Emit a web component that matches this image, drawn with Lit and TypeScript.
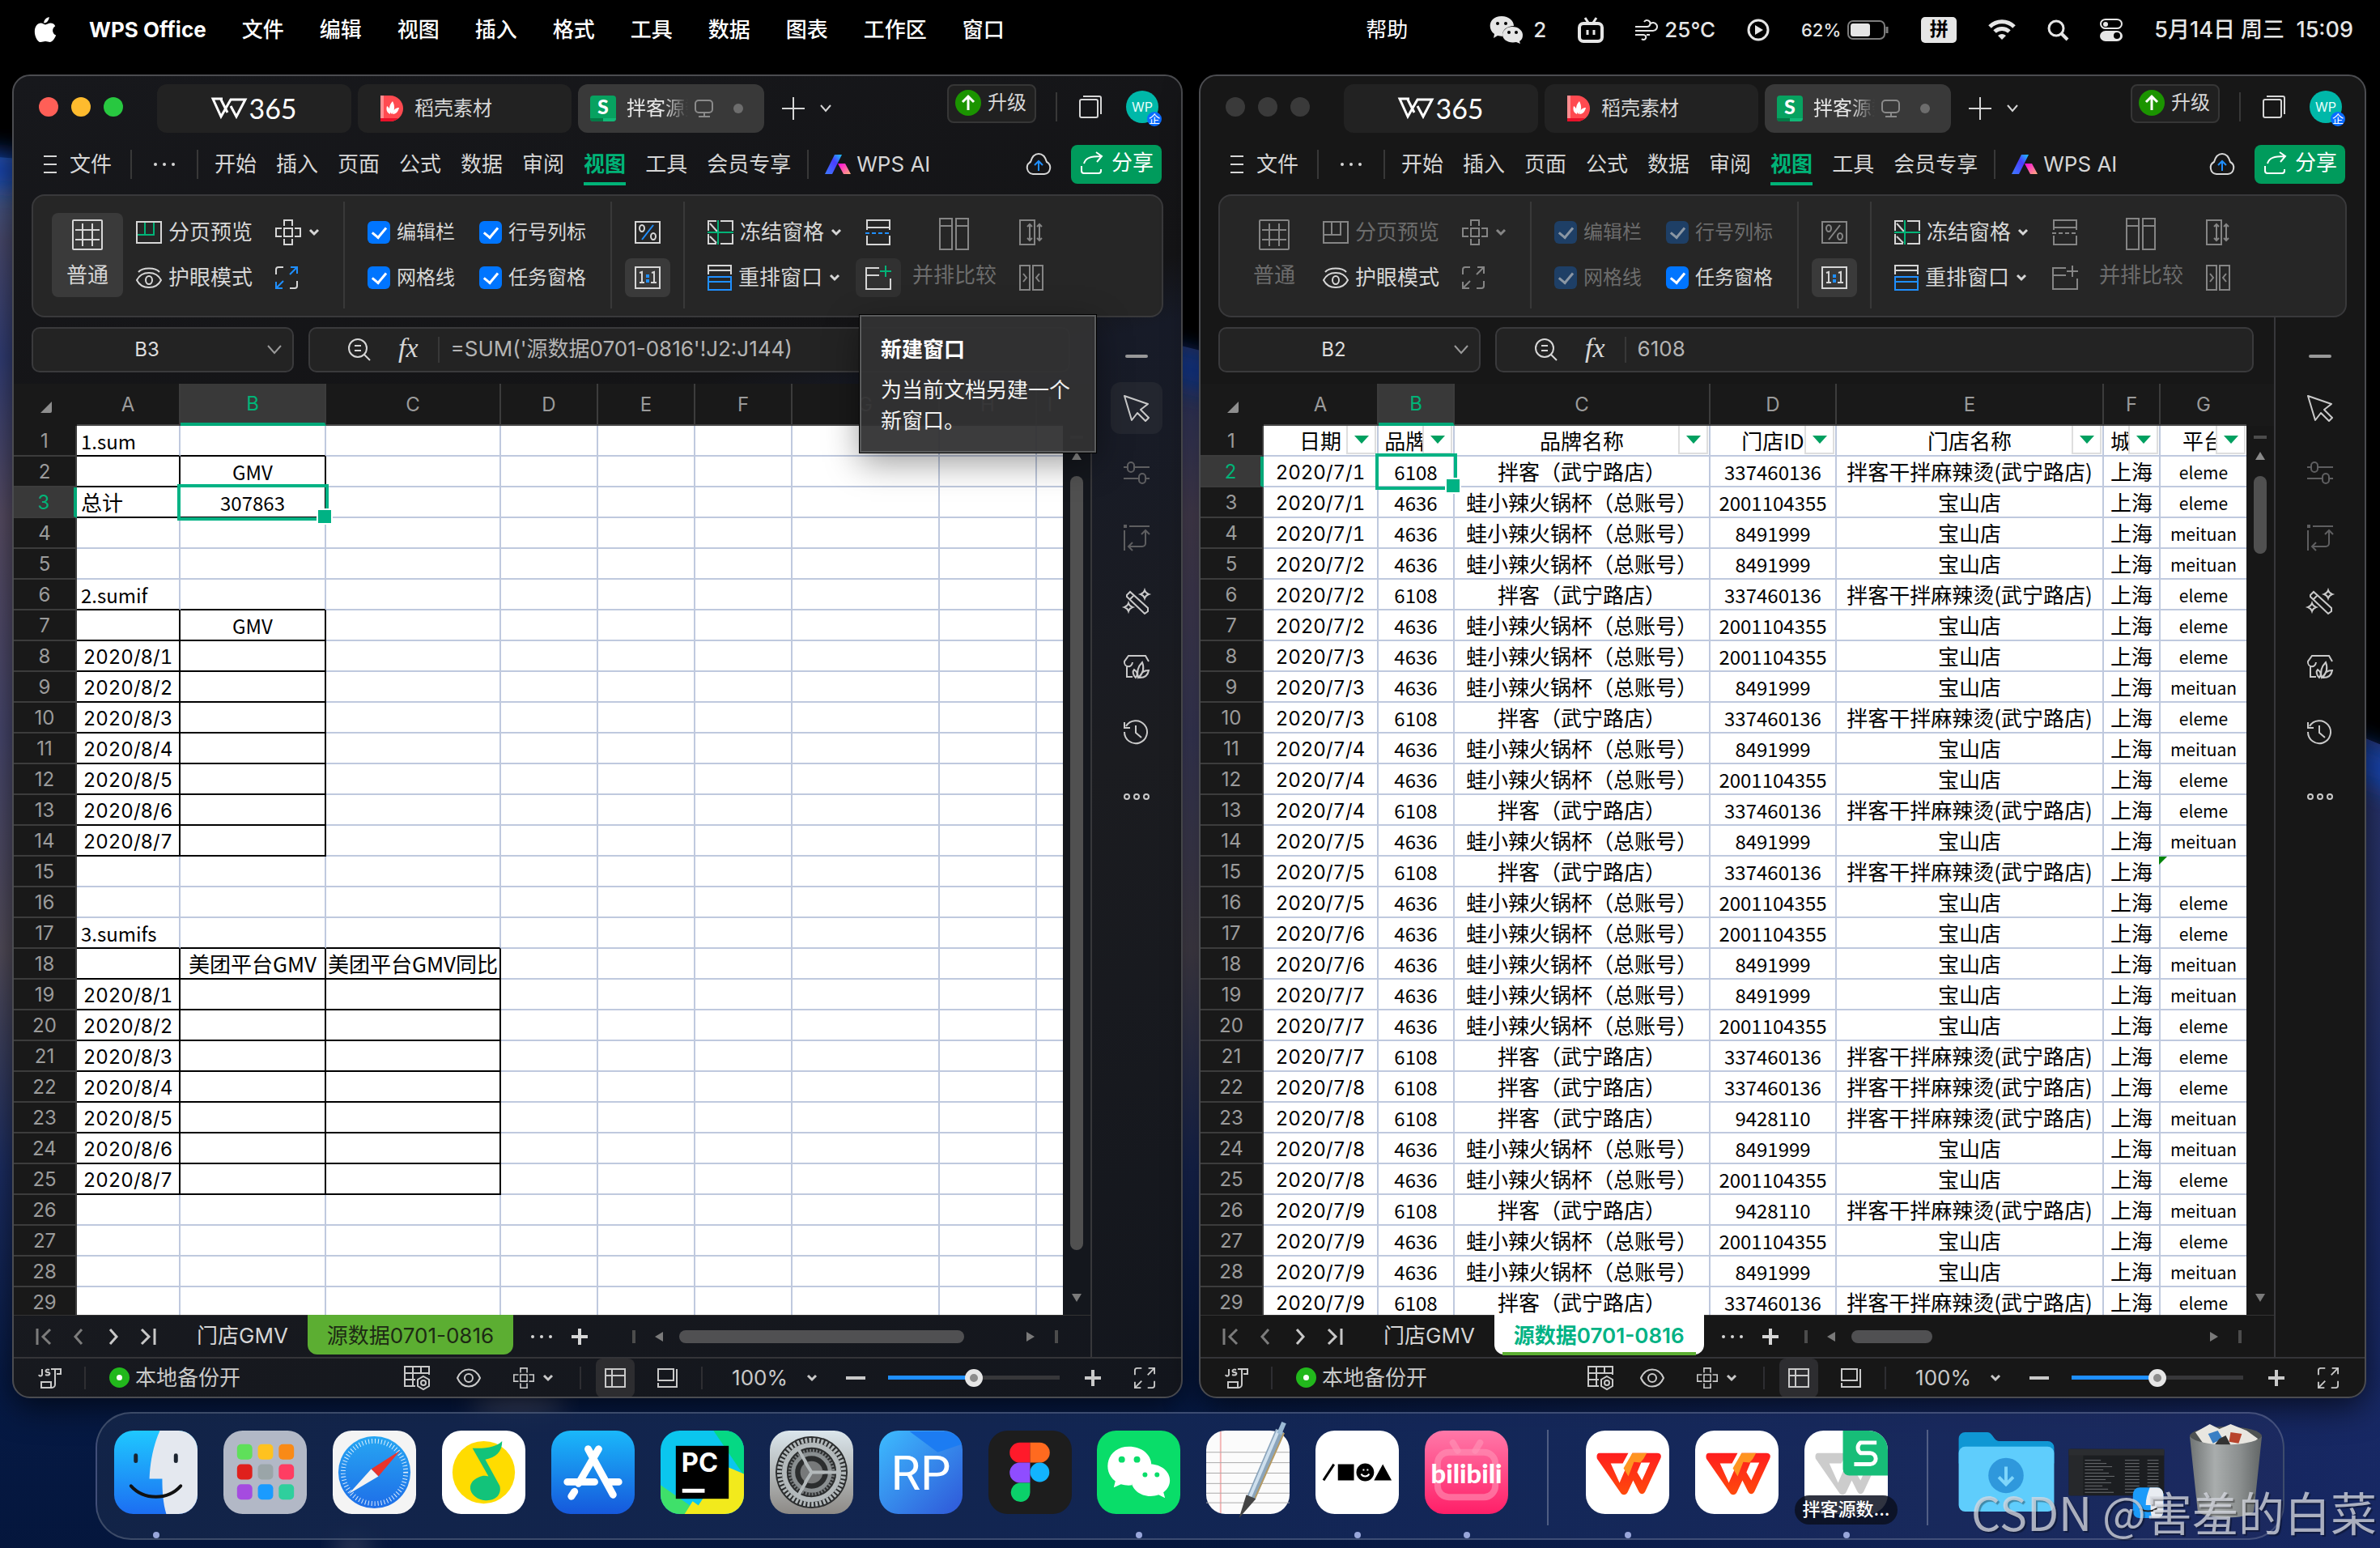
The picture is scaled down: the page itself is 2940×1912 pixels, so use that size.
import { LitElement, html, svg, css, nothing, TemplateResult } from "lit";
import { customElement, property } from "lit/decorators.js";
import { classMap } from "lit/directives/class-map.js";
import { styleMap } from "lit/directives/style-map.js";

/* ---------- icons ---------- */

const icon = (w: number, h: number, body: unknown, cls = "") =>
  html`<svg class="ic ${cls}" width=${w} height=${h} viewBox="0 0 ${w} ${h}" aria-hidden="true">${body}</svg>`;

const chevron = () => icon(14, 10, svg`<path d="M2 2l5 5 5-5"/>`, "bold");
const crossHair = (s = 32) => html`<svg class="ic" width=${s} height=${s} viewBox="0 0 32 32" aria-hidden="true">
  <path d="M11 11h10v10H11zM11 8V1h10v7M11 24v7h10v-7M8 11H1v10h7M24 11h7v10h-7"/></svg>`;
const corners = (s: number) => html`<svg class="ic" width=${s} height=${s} viewBox="0 0 28 28" aria-hidden="true">
  <path d="M10 1H4a3 3 0 0 0-3 3v6M18 27h6a3 3 0 0 0 3-3v-6"/>
  <path class="b" d="M19 1h8v8M27 1l-9 9M9 27H1v-8M1 27l9-9"/></svg>`;

const icons = {
  burger: () => icon(16, 24, svg`<path d="M0 2h16M0 12h16M0 22h16"/>`),
  dots: () => icon(28, 6, svg`<g class="fill"><circle cx="3" cy="3" r="2"/><circle cx="14" cy="3" r="2"/><circle cx="25" cy="3" r="2"/></g>`),
  plus: () => icon(28, 28, svg`<path d="M14 0v28M0 14h28"/>`),
  plusSmall: () => icon(20, 20, svg`<path stroke-width="4" d="M10 0v20M0 10h20"/>`),
  minus: () => icon(24, 4, svg`<path stroke-width="4" d="M0 2h24"/>`),
  more2: () => icon(14, 10, svg`<path d="M1 1l6 7 6-7"/>`),
  fullscreen: () => corners(28),
  normal: () => icon(38, 38, svg`<rect x="1" y="1" width="36" height="36" rx="1"/><path d="M13 5v28M25 5v28M4 13h30M4 25h30"/>`),
  pageBreak: () => icon(32, 28, svg`<rect x="1" y="1" width="30" height="26"/><path class="g" d="M11 2v16M22 2v16M2 17h21"/>`),
  eyeCare: () => icon(32, 26, svg`<path d="M3 6C8 0 24 0 29 6M1 16C7 4 25 4 31 16 25 28 7 28 1 16z"/><ellipse cx="16" cy="16" rx="4" ry="5"/>`),
  percent: () => icon(32, 28, svg`<rect x="1" y="1" width="30" height="26"/><ellipse cx="9" cy="9" rx="3" ry="4"/><ellipse cx="23" cy="19" rx="3" ry="4"/><path class="b" d="M23 5L9 23"/>`),
  ratio: () => icon(32, 28, svg`<rect x="1" y="1" width="30" height="26"/><path d="M6 8l3-1v13M6 20h6M21 8l3-1v13M20 20h7"/><path class="b" stroke-width="4" d="M14 12h4M14 18h4"/>`),
  freeze: () => icon(32, 30, svg`<path d="M11 1H1v12M16 1h15v12M1 17v12h10M16 29h15V17M3 4l9 10M3 20l8 8"/><path class="g" d="M13 0v30M0 15h32"/>`),
  arrange: () => icon(30, 32, svg`<path d="M1 12V1h28v11M1 7h28"/><path class="b" d="M1 15h28v16H1zM1 21h28"/>`),
  split: () => icon(32, 32, svg`<path d="M2 13V1h28v12M2 10h28M2 20v11h28V20"/><path class="b" stroke-dasharray="5 3" d="M0 17h32"/>`),
  newWindow: () => icon(32, 30, svg`<path d="M17 3H1v26h30V16M1 12h16"/><path class="g" d="M25 0v14M18 7h14"/>`),
  compare: () => icon(38, 40, svg`<path d="M1 1h15v38H1zM1 10h15M21 1h15v38H21zM21 10h15"/>`),
  syncScroll: () => icon(30, 32, svg`<path d="M9 31H1V1h18v30H9"/><path d="M13 6v20M10 9l3-3 3 3M10 23l3 3 3-3M25 6v20M22 9l3-3 3 3M22 23l3 3 3-3"/>`),
  resetPos: () => icon(30, 32, svg`<path d="M1 1h12v30H1zM17 1h12v30H17zM5 11l4 5-4 5M25 11l-4 5 4 5"/>`),
  windows: () => icon(28, 28, svg`<rect x="1" y="5" width="22" height="22" rx="2"/><path d="M5 1h20a2 2 0 0 1 2 2v20"/>`),
  monitor: () => icon(24, 22, svg`<rect x="1" y="1" width="21" height="15" rx="4"/><path d="M12 17v3M5 21h14"/>`),
  cloud: () => icon(34, 28, svg`<path d="M10 26h14a8 8 0 0 0 3-15C25 4 21 1 17 1S9 4 7 11a8 8 0 0 0 3 15z"/><path class="b" d="M17 22V10M12 15l5-5 5 5"/>`),
  share: () => icon(28, 28, svg`<path d="M1 18v6a3 3 0 0 0 3 3h18a3 3 0 0 0 3-3v-2"/><path d="M4 15c2-7 8-9 21-9M19 1l7 5-6 7"/>`),
  ai: () => html`<svg width="32" height="24" viewBox="0 0 32 24" aria-hidden="true">
    <defs><linearGradient id="ai1" x1="0" y1="1" x2="1" y2="0"><stop offset="0" stop-color="#3d7bff"/><stop offset=".6" stop-color="#4a3dff"/><stop offset="1" stop-color="#19c8ff"/></linearGradient>
    <linearGradient id="ai2" x1="0" y1="0" x2="1" y2="1"><stop offset="0" stop-color="#ff00e0"/><stop offset="1" stop-color="#ffb37a"/></linearGradient></defs>
    <path fill="url(#ai1)" d="M0 24L12 0h9L9 24z"/><path fill="url(#ai2)" d="M16 11h9l7 13h-9z"/></svg>`,
  wlogo: () => icon(44, 26, svg`<path stroke-width="3" d="M14 1H2l10 22 12-21h18L31 23l-7-13M12 2l8 16"/>`),
  docer: () => html`<svg width="28" height="32" viewBox="0 0 28 32" aria-hidden="true">
    <path fill="#ff4a50" d="M0 0h12a16 16 0 0 1 0 32H0z"/><path fill="#ff8d90" d="M0 0h4v32H0z"/><path fill="#e8112a" d="M0 28h22a16 16 0 0 1-10 4H0z"/>
    <path fill="#fff" d="M14 23c-5-5-3-12 1-16 3 6 3 11-1 16zM12 23c-5-2-5-7-4-10 3 2 5 6 4 10zM15 23c1-6 4-8 8-8-1 5-4 8-8 8z"/></svg>`,
  sheet: () => html`<svg width="32" height="32" viewBox="0 0 32 32" aria-hidden="true">
    <rect width="32" height="32" rx="4" fill="#07a260"/><path fill="#047a46" d="M0 28h16v4H4a4 4 0 0 1-4-4z"/><path fill="#12b877" d="M16 28h16a4 4 0 0 1-4 4H16z"/>
    <text x="16" y="23" text-anchor="middle" fill="#fff" font-family="Lato, sans-serif" font-weight="900" font-size="25">S</text></svg>`,
  up: () => html`<svg width="32" height="32" viewBox="0 0 32 32" aria-hidden="true"><circle cx="16" cy="16" r="16" fill="#1b9400"/><path d="M16 25V8M9 15l7-7 7 7" fill="none" stroke="#fff" stroke-width="3"/></svg>`,
  search: () => icon(28, 28, svg`<circle cx="12" cy="12" r="11"/><path d="M20 20l7 7M8 9h8M8 15h8"/>`),
  corner: () => icon(16, 16, svg`<path class="fill" d="M15 1v12a2 2 0 0 1-2 2H1z"/>`),
  pointer: () => icon(32, 32, svg`<path d="M1 1l29 10-9 7 10 10-4 4-10-10-7 9z" stroke-linejoin="round"/>`),
  sliders: () => icon(32, 28, svg`<path d="M0 7h5M13 7h19M0 21h19M27 21h5"/><rect x="5" y="1" width="8" height="12" rx="4"/><rect x="19" y="15" width="8" height="12" rx="4"/>`),
  transpose: () => icon(32, 32, svg`<path d="M7 2h25M1 7v25M27 7v16a4 4 0 0 1-4 4H7M22 12l5-5 5 5M11 22l-5 5 5 5"/><path class="fill" d="M0 0h4v4H0z"/>`),
  wand: () => icon(32, 32, svg`<path d="M4 7l4-4 22 20v4l-4 3L4 9zM13 7L8 12M26 1c1 3 2 4 5 5-3 1-4 2-5 5-1-3-2-4-5-5 3-1 4-2 5-5zM6 17c1 3 2 4 5 5-3 1-4 2-5 5-1-3-2-4-5-5 3-1 4-2 5-5z"/>`),
  shop: () => icon(32, 30, svg`<path d="M31 8l-4-7H6L1 8c-1 7 9 9 10 1M4 14v13h7M15 28c-4-4-4-8-2-10 4 3 5 6 2 10zM18 28c-2-7 0-14 5-19 3 8 1 14-5 19zM20 28c1-6 5-9 11-9-1 6-5 9-11 9z"/>`),
  history: () => icon(32, 32, svg`<path d="M3 9a14 14 0 1 1-2 7M1 4v7h7M15 8v9l7 6"/>`),
  more: () => icon(32, 10, svg`<circle cx="4" cy="5" r="3"/><circle cx="16" cy="5" r="3"/><circle cx="28" cy="5" r="3"/>`),
  js: () => icon(28, 26, svg`<path d="M4 2v6a2 2 0 0 1-4 1M13 3c-5-2-6 3-2 3s3 5-3 3M15 2h12v6h-5M20 2v19a4 4 0 0 1-4 4H3v-7h12v6"/>`),
  tableGear: () => icon(32, 30, svg`<path d="M14 25H1V1h30v10M1 9h30M1 17h13M11 1v24M21 1v9"/><path d="M24 13l7 4v8l-7 4-7-4v-8z"/><circle cx="24" cy="21" r="3"/>`),
  eye: () => icon(30, 24, svg`<path d="M1 12C7-2 23-2 29 12 23 26 7 26 1 12z"/><circle cx="15" cy="12" r="5"/>`),
  viewGrid: () => icon(26, 24, svg`<path d="M1 1h24v22H1zM1 9h24M9 1v22"/>`),
  viewPage: () => icon(26, 24, svg`<path d="M1 1h19v14H1zM24 1v22H1v-5"/>`),
  navFirst: () => icon(20, 20, svg`<path stroke-width="3" d="M2 0v20M18 1l-9 9 9 9"/>`),
  navPrev: () => icon(12, 20, svg`<path stroke-width="3" d="M10 1l-8 9 8 9"/>`),
  navNext: () => icon(12, 20, svg`<path stroke-width="3" d="M2 1l8 9-8 9"/>`),
  navLast: () => icon(20, 20, svg`<path stroke-width="3" d="M18 0v20M2 1l9 9-9 9"/>`),
};

const shared = css`
  * { box-sizing: border-box; }
  .ic { display: block; flex: none; fill: none; stroke: currentColor; stroke-width: 2; overflow: visible; }
  .ic.bold { stroke-width: 3; }
  .fill { fill: currentColor; stroke: none; }
  .g { stroke: var(--g, #00b377); }
  .b { stroke: var(--b, #1f8fff); }
  button { font: inherit; color: inherit; background: none; border: 0; padding: 0; margin: 0; display: flex; align-items: center; cursor: default; }
  button, label { white-space: nowrap; }
`;

/* ---------- sheet data ---------- */

interface Cell { text?: string; kind?: "date" | "num" | "text" | "latin" | "tag"; left?: boolean; box?: boolean; filter?: boolean; flag?: boolean; }
interface Sheet { widths: number[]; active: [number, number]; rows: Cell[][]; }

const ROWS = 29;
const letters = "ABCDEFGHI";

function summarySheet(): Sheet {
  const rows: Cell[][] = Array.from({ length: ROWS }, () => Array.from({ length: 9 }, () => ({})));
  const put = (r: number, c: number, cell: Cell) => (rows[r - 1][c] = { ...rows[r - 1][c], ...cell });
  const frame = (r1: number, r2: number, cols: number) => {
    for (let r = r1; r <= r2; r++) for (let c = 0; c < cols; c++) put(r, c, { box: true });
  };
  frame(2, 3, 2);
  frame(7, 14, 2);
  frame(18, 25, 3);
  put(1, 0, { text: "1.sum", kind: "latin", left: true });
  put(2, 1, { text: "GMV", kind: "latin" });
  put(3, 0, { text: "总计", left: true });
  put(3, 1, { text: "307863", kind: "num" });
  put(6, 0, { text: "2.sumif", kind: "latin", left: true });
  put(7, 1, { text: "GMV", kind: "latin" });
  put(17, 0, { text: "3.sumifs", kind: "latin", left: true });
  put(18, 1, { text: "美团平台GMV", kind: "text" });
  put(18, 2, { text: "美团平台GMV同比", kind: "text" });
  for (let d = 1; d <= 7; d++) {
    put(7 + d, 0, { text: `2020/8/${d}`, kind: "date" });
    put(18 + d, 0, { text: `2020/8/${d}`, kind: "date" });
  }
  return { widths: [128, 180, 216, 120, 120, 120, 182, 120, 0], active: [3, 1], rows };
}

function sourceSheet(): Sheet {
  const bk = ["6108", "拌客（武宁路店）"], wa = ["4636", "蛙小辣火锅杯（总账号）"];
  const far = "拌客干拌麻辣烫(武宁路店)", near = "宝山店";
  const kinds: Record<string, string[]> = {
    a: [...bk, "337460136", far, "上海", "eleme"],
    n: [...bk, "9428110", far, "上海", "meituan"],
    x: [...bk, "337460136", far, "上海", ""],
    e: [...wa, "2001104355", near, "上海", "eleme"],
    m: [...wa, "8491999", near, "上海", "meituan"],
  };
  const days = "1a1e1m2m2a2e3e3m3a4m4e4a5m5x5e6e6m7m7e7a8a8n8m8e9n9e9m9a";
  const head = ["日期", "品牌ID", "品牌名称", "门店ID", "门店名称", "城市", "平台"];
  const rows: Cell[][] = [head.map((text) => ({ text, filter: true }))];
  for (let i = 0; i < days.length; i += 2) {
    const v = kinds[days[i + 1]];
    rows.push([
      { text: `2020/7/${days[i]}`, kind: "date" },
      { text: v[0], kind: "num" }, { text: v[1] }, { text: v[2], kind: "num" },
      { text: v[3] }, { text: v[4] }, { text: v[5], kind: "tag", flag: v[5] === "" },
    ]);
  }
  return { widths: [142, 94, 316, 156, 330, 70, 0], active: [2, 1], rows };
}

@customElement("sheet-grid")
export class SheetGrid extends LitElement {
  @property({ attribute: false }) sheet!: Sheet;

  static styles = [shared, css`
    :host { display: block; overflow: hidden; height: 100%; }
    table { border-collapse: separate; border-spacing: 0; table-layout: fixed; width: 100%; }
    th { font: 400 24px/34px Inter, sans-serif; color: #9b9b9b; background: #191919; padding: 2px 0 0; }
    .gutter-col { width: 78px; }
    thead th { height: 52px; border-bottom: 2px solid #484848; border-right: 2px solid #3c3c3c; }
    thead th.gutter { border-color: #191919; }
    thead th.gutter .ic { margin: 6px 0 0 32px; color: #8e8e8e; }
    thead th.last { border-right: 0; }
    thead th.on { background: #393939; color: #00b377; border-bottom: 4px solid #00a878; line-height: 32px; }
    tbody th { border-bottom: 2px solid #3c3c3c; border-right: 2px solid #3c3c3c; }
    tbody th.on { background: #393939; color: #00b377; border-right: 4px solid #00a878; }
    tr { height: 38px; }
    td { background: #fff; color: #000; padding: 0; height: 38px; border-right: 2px solid #bfc9de; border-bottom: 2px solid #bfc9de; position: relative; font: 400 26px/36px "Noto Sans CJK SC", sans-serif; text-align: center; }
    td.last { border-right: 0; }
    td.br { border-right-color: #000; }
    td.bb { border-bottom-color: #000; }
    .v { overflow: hidden; white-space: nowrap; height: 36px; display: flex; justify-content: center; }
    .v.left { justify-content: flex-start; padding-left: 5px; }
    .v.num, .v.latin { font-size: 24px; line-height: 38px; }
    .v.tag { font-size: 21px; line-height: 38px; }
    .v.date { font: 400 24px/40px Inter, sans-serif; font-variant-numeric: tabular-nums; }
    .filter { position: absolute; right: 1px; top: 0; width: 37px; height: 35px; background: #fff; border: 2px solid #dedede; border-top: 0; justify-content: center; }
    .filter::after { content: ""; border: 9px solid transparent; border-top: 10px solid #00a060; border-bottom: 0; }
    .sel { position: absolute; inset: -4px -5px -5px -4px; border: 4px solid #00b284; z-index: 1; }
    .sel::after { content: ""; position: absolute; right: -9px; bottom: -9px; width: 16px; height: 16px; background: #00b284; border: 2px solid #fff; }
    .flag { position: absolute; left: -2px; top: 0; border: 5px solid #00840a; border-right-color: transparent; border-bottom-color: transparent; }
  `];

  render() {
    const { widths, rows, active } = this.sheet;
    const end = widths.length - 1;
    return html`<table>
      <colgroup><col class="gutter-col">${widths.map((w) => html`<col style=${styleMap({ width: w ? `${w}px` : "auto" })}>`)}</colgroup>
      <thead><tr><th class="gutter">${icons.corner()}</th>
        ${widths.map((_, c) => html`<th class=${classMap({ on: c === active[1], last: c === end })}>${letters[c]}</th>`)}</tr></thead>
      <tbody>${rows.map((row, r) => html`<tr>
        <th class=${classMap({ on: r + 1 === active[0] })}>${r + 1}</th>
        ${row.map((cell, c) => this.cell(cell, r, c, end))}</tr>`)}</tbody>
    </table>`;
  }

  private cell(cell: Cell, r: number, c: number, end: number): TemplateResult {
    const below = this.sheet.rows[r + 1]?.[c]?.box;
    const on = r + 1 === this.sheet.active[0] && c === this.sheet.active[1];
    return html`<td class=${classMap({ last: c === end, br: !!cell.box, bb: !!cell.box || !!below })}>
      ${cell.text ? html`<div class="v ${cell.kind ?? ""} ${cell.left ? "left" : ""}">${cell.text}</div>` : nothing}
      ${cell.filter ? html`<button class="filter" aria-label="筛选"></button>` : nothing}
      ${cell.flag ? html`<i class="flag"></i>` : nothing}
      ${on ? html`<i class="sel"></i>` : nothing}
    </td>`;
  }
}

/* ---------- spreadsheet window ---------- */

@customElement("sheet-window")
export class SheetWindow extends LitElement {
  @property({ attribute: false }) sheet!: Sheet;
  @property({ type: Boolean, reflect: true }) dimmed = false;
  @property() cellName = "";
  @property() formula = "";
  @property({ type: Boolean }) tip = false;
  @property({ type: Number }) vThumb = 900;
  @property({ type: Number }) hThumb = 300;

  static styles = [shared, css`
    :host { display: flex; flex-direction: column; min-width: 0; min-height: 0; position: relative; border: 2px solid #4b4c50; border-radius: 22px; overflow: hidden;
      background: linear-gradient(165deg, #17181c, #141416 30%, #171b28 34%, #1b1c20 60%, #13161d); color: #d6d6d6; font: 400 26px/32px Inter, "Noto Sans CJK SC", sans-serif; box-shadow: 0 10px 40px #000a; }
    :host([dimmed]) { background: #171717; }
    .title { display: flex; align-items: center; padding: 10px 28px 0 31px; height: 70px; flex: none; }
    .lights { display: flex; gap: 16px; margin: -4px 42px 0 0; }
    .light { width: 24px; height: 24px; border-radius: 50%; }
    .red { background: #ff5f57; } .amber { background: #febb2e; } .green { background: #28c840; }
    :host([dimmed]) .light { background: #3a3a3a; }
    .tabs { display: flex; gap: 8px; }
    .tab { height: 60px; border-radius: 12px; background: #222; display: flex; align-items: center; font-size: 24px; }
    .tab.home { width: 240px; justify-content: center; color: #fff; gap: 2px; font: 400 34px/40px Lato, sans-serif; }
    .tab.docer { width: 264px; padding-left: 28px; gap: 14px; }
    .tab.doc { width: 230px; padding-left: 15px; background: #393939; color: #e8e8e8; }
    .doc-name { width: 76px; margin: 0 8px 0 13px; overflow: hidden; white-space: nowrap; -webkit-mask-image: linear-gradient(90deg, #000 60%, transparent); mask-image: linear-gradient(90deg, #000 60%, transparent); }
    .doc .ic { color: #8a8a8a; }
    .dirty { width: 12px; height: 12px; border-radius: 50%; background: #6d6d6d; margin-left: 24px; }
    .add { margin-left: 22px; } .add-more { margin-left: 19px; }
    .title-right { margin-left: auto; height: 60px; display: flex; align-items: center; padding-bottom: 4px; }
    .upgrade { align-self: flex-start; height: 48px; width: 110px; border: 2px solid #363636; border-radius: 8px; background: #202020; padding: 0 0 2px 8px; gap: 8px; font-size: 24px; }
    .rule { width: 2px; height: 36px; background: #383838; flex: none; }
    .title-right .rule { margin: 0 27px 0 24px; }
    .avatar { position: relative; width: 40px; height: 40px; border-radius: 50%; background: #00b8a9; color: #e9fffb; font-size: 16px; justify-content: center; margin-left: 30px; }
    .badge { position: absolute; right: -4px; bottom: -4px; width: 18px; height: 18px; border-radius: 50%; background: #0a6cff; color: #fff; font-size: 14px; line-height: 17px; text-align: center; }
    .menu { display: flex; align-items: center; height: 76px; padding: 2px 24px 0 37px; flex: none; }
    .menu .file { gap: 16px; margin-right: 23px; }
    .menu .dots { margin: 0 26px; }
    .menu nav { display: flex; gap: 24px; margin: 0 20px; }
    .menu nav button { height: 52px; border-bottom: 4px solid transparent; border-top: 4px solid transparent; }
    .menu nav .on { color: #00b377; font-weight: 700; border-bottom-color: #00b377; }
    .ai { gap: 7px; margin-left: 20px; }
    .sync { margin-left: auto; }
    .share { margin-left: 23px; width: 112px; height: 48px; border-radius: 8px; background: #009b5c; color: #fff; padding-left: 12px; gap: 10px; padding-bottom: 4px; }
    .ribbon { margin: 0 22px; height: 152px; border: 2px solid #39393b; border-radius: 16px; background: #262626; display: flex; align-items: center; flex: none; padding-bottom: 2px; }
    .group { height: 132px; display: flex; align-items: center; border-right: 2px solid #393939; }
    .group:last-child { border: 0; }
    .rows { display: grid; grid-template-rows: 56px 56px; align-items: center; }
    .two { grid-template-columns: auto auto; }
    .big { flex-direction: column; width: 88px; height: 104px; border-radius: 8px; padding-top: 8px; gap: 15px; }
    .big.on, .sq.on { background: #3a3a3a; }
    .sq.hover { background: #313131; }
    .sq { width: 56px; height: 48px; border-radius: 8px; justify-content: center; }
    .cmd { gap: 8px; }
    .g1 { padding: 0 29px 0 23px; gap: 16px; } .g1 .two { column-gap: 28px; }
    .wide { gap: 9px; }
    .g2 { padding: 0 30px 0 28px; } .g2 .two { column-gap: 30px; }
    .g3 { padding: 0 16px; }
    .g4 { padding-left: 28px; }
    .g4 .sqs { margin: 0 14px 0 17px; }
    .compare { width: 104px; padding-top: 6px; height: 104px; gap: 15px; margin-right: 15px; }
    .check { display: flex; align-items: center; gap: 8px; font-size: 24px; }
    input[type="checkbox"] { appearance: none; margin: 0; width: 28px; height: 28px; border-radius: 6px; background: #0075ff; display: grid; place-items: center; }
    input[type="checkbox"]::after { content: ""; width: 8px; height: 14px; border: solid #fff; border-width: 0 3px 3px 0; rotate: 40deg; margin-top: -4px; }
    .off { color: #6c6c6c; --g: currentColor; --b: currentColor; }
    .off .ic { color: #858585; }
    .off input[type="checkbox"] { background: #1e3f66; }
    .off input[type="checkbox"]::after { border-color: #8b97a4; }
    .body { flex: 1; display: flex; min-height: 0; }
    .main { flex: 1; min-width: 0; display: flex; flex-direction: column; }
    .bar { display: flex; gap: 18px; padding: 12px 25px 14px 22px; flex: none; }
    .field { height: 56px; border: 2px solid #3a3a3c; border-radius: 10px; background: #232323; display: flex; align-items: center; }
    .field input { background: none; border: 0; outline: 0; padding: 0; color: #ddd; font: inherit; min-width: 0; }
    .name { width: 324px; padding-right: 13px; }
    .name input { flex: 1; font-size: 24px; text-align: center; padding: 0 8px 0 0; }
    .name .ic { color: #9a9a9a; }
    .fx { flex: 1; padding-left: 47px; }
    .fx em { font: italic 400 34px/36px "Liberation Serif", serif; margin: 0 24px 4px 34px; }
    .fx input { flex: 1; margin: 0 0 2px 14px; color: #b4b4b4; }
    .fx .rule { height: 32px; }
    .view { flex: 1; min-height: 0; display: flex; background: #191919; }
    sheet-grid { flex: 1; min-width: 0; }
    .vscroll { width: 34px; margin-top: 52px; background: #14171d; display: flex; flex-direction: column; align-items: center; padding: 12px 0 16px; }
    :host([dimmed]) .vscroll { background: #171717; }
    .vscroll .bar-mini { width: 16px; height: 4px; background: #4c4c4c; }
    .vscroll .thumb { width: 16px; border-radius: 8px; background: #505050; margin: 20px 0 auto; }
    .tri { border: 6px solid transparent; width: 0; height: 0; flex: none; }
    .tri.u { border-bottom: 10px solid #8a8a8a; border-top: 0; margin-top: 16px; }
    .tri.d { border-top: 10px solid #7a7a7a; border-bottom: 0; }
    .tri.l { border-right: 10px solid #7a7a7a; border-left: 0; }
    .tri.r { border-left: 10px solid #7a7a7a; border-right: 0; }
    .sheets { height: 52px; flex: none; display: flex; align-items: center; padding-left: 15px; border-top: 1px solid #333; }
    .nav { width: 43px; height: 40px; justify-content: center; color: #c8c8c8; }
    .nav.weak { color: #7c7c7c; }
    .stab { padding: 2px 24px 0; height: 48px; align-self: flex-start; margin-left: 15px; }
    .stab.cur { margin: -1px 0 0; height: 49px; background: #5cae32; color: #1d2a14; border-radius: 0 0 12px 12px; position: relative; }
    :host([dimmed]) .stab.cur { background: #fff; color: #00b284; font-weight: 600; }
    :host([dimmed]) .stab.cur::after { content: ""; position: absolute; left: 10px; right: 10px; bottom: -1px; height: 4px; background: #5cae32; }
    .sheets .dots { margin: 0 23px 0 21px; }
    .hscroll { width: 526px; margin: 0 40px 0 auto; display: flex; align-items: center; }
    :host([dimmed]) .hscroll { width: 540px; }
    .stop { width: 4px; height: 16px; background: #4c4c4c; flex: none; }
    .hscroll .tri.l { margin: 0 20px 0 24px; }
    .hscroll .tri.r { margin: 0 25px 0 auto; }
    .hscroll .thumb { height: 16px; border-radius: 8px; background: #505052; }
    .side { width: 112px; border-left: 2px solid #37373b; display: flex; flex-direction: column; align-items: center; padding-top: 32px; gap: 16px; color: #c9c9c9; }
    .side button { width: 64px; height: 64px; border-radius: 12px; justify-content: center; flex: none; }
    .side .fold { height: 32px; color: #999; }
    .side .on { background: #23262f; }
    :host([dimmed]) .side .on { background: none; }
    .side .weak { color: #5e5e60; }
    .status { flex: none; height: 49px; border-top: 2px solid #343438; display: flex; align-items: center; padding: 0 32px 0 31px; color: #c9c9c9; --b: currentColor; }
    .status .rule { height: 28px; background: #2e2e32; }
    .backup { gap: 7px; margin-left: 29px; }
    .backup i { width: 25px; height: 25px; border-radius: 50%; border: 9px solid #22b81c; background: #fff; }
    .status .rule.r1 { margin-left: 28px; }
    .status .set { margin-left: auto; } .status .m1 { margin-left: 33px; } .status .m2 { margin-left: 40px; }
    .status .m2 { gap: 10px; }
    .status .r2 { margin: 0 18px 0 32px; }
    .status .sq { width: 48px; background: #2d2d30; margin-right: 28px; }
    .status .r3 { margin: 0 36px 0 28px; }
    .zoom { gap: 23px; margin-right: 35px; }
    input[type="range"] { appearance: none; width: 212px; height: 24px; margin: 0 31px 0 28px; background: linear-gradient(90deg, #1f8fff 50%, #37373a 50%) center / 100% 5px no-repeat; }
    input[type="range"]::-webkit-slider-thumb { appearance: none; width: 22px; height: 22px; border-radius: 50%; background: #8c8c8c; border: 6px solid #e6e6e6; }
    .full { margin-left: 41px; }
    .tip { position: absolute; left: 1045px; top: 295px; width: 292px; height: 170px; padding: 22px 24px; background: #313233f2; border: 2px solid #5a5b5c; outline: 1px solid #000; color: #f0f0f0; font-size: 26px; line-height: 38px; z-index: 5; box-shadow: 0 12px 40px #0006; }
    .tip b { display: block; margin-bottom: 12px; color: #fff; }
  `];

  private check(label: string, live = false) {
    const off = this.dimmed && !live;
    return html`<label class="check ${off ? "off" : ""}"><input type="checkbox" checked ?disabled=${off}>${label}</label>`;
  }

  render() {
    const off = this.dimmed ? "off" : "";
    return html`
      <div class="title">
        <div class="lights"><button class="light red" aria-label="关闭"></button><button class="light amber" aria-label="最小化"></button><button class="light green" aria-label="缩放"></button></div>
        <div class="tabs">
          <button class="tab home">${icons.wlogo()}365</button>
          <button class="tab docer">${icons.docer()}稻壳素材</button>
          <button class="tab doc">${icons.sheet()}<span class="doc-name">拌客源数</span>${icons.monitor()}<i class="dirty"></i></button>
        </div>
        <button class="add" aria-label="新建">${icons.plus()}</button>
        <button class="add-more" aria-label="更多">${icons.more2()}</button>
        <div class="title-right">
          <button class="upgrade">${icons.up()}升级</button><i class="rule"></i>
          <button aria-label="窗口">${icons.windows()}</button>
          <button class="avatar">WP<span class="badge">企</span></button>
        </div>
      </div>
      <div class="menu">
        <button class="file">${icons.burger()}文件</button><i class="rule"></i>
        <button class="dots" aria-label="更多">${icons.dots()}</button><i class="rule"></i>
        <nav>${["开始", "插入", "页面", "公式", "数据", "审阅", "视图", "工具", "会员专享"].map((t) => html`<button class=${t === "视图" ? "on" : ""}>${t}</button>`)}</nav>
        <i class="rule"></i>
        <button class="ai">${icons.ai()}WPS AI</button>
        <button class="sync" aria-label="云同步">${icons.cloud()}</button>
        <button class="share">${icons.share()}分享</button>
      </div>
      <div class="ribbon">
        <div class="group g1">
          <button class="big ${this.dimmed ? "off" : "on"}">${icons.normal()}普通</button>
          <div class="rows two">
            <button class="cmd ${off}">${icons.pageBreak()}分页预览</button>
            <button class="wide ${off}" aria-label="阅读模式">${crossHair()}${chevron()}</button>
            <button class="cmd">${icons.eyeCare()}护眼模式</button>
            <button class=${off} aria-label="全屏">${icons.fullscreen()}</button>
          </div>
        </div>
        <div class="group g2"><div class="rows two">
          ${this.check("编辑栏")}${this.check("行号列标")}${this.check("网格线")}${this.check("任务窗格", true)}
        </div></div>
        <div class="group g3"><div class="rows">
          <button class="sq ${off}" aria-label="缩放">${icons.percent()}</button>
          <button class="sq on" aria-label="100%">${icons.ratio()}</button>
        </div></div>
        <div class="group g4">
          <div class="rows">
            <button class="cmd">${icons.freeze()}冻结窗格${chevron()}</button>
            <button class="cmd">${icons.arrange()}重排窗口${chevron()}</button>
          </div>
          <div class="rows sqs">
            <button class="sq ${off}" aria-label="拆分">${icons.split()}</button>
            <button class="sq ${this.dimmed ? "off" : "hover"}" aria-label="新建窗口">${icons.newWindow()}</button>
          </div>
          <button class="big compare off">${icons.compare()}并排比较</button>
          <div class="rows off">
            <button class="sq" aria-label="同步滚动">${icons.syncScroll()}</button>
            <button class="sq" aria-label="重设位置">${icons.resetPos()}</button>
          </div>
        </div>
      </div>
      <div class="body">
        <div class="main">
          <div class="bar">
            <div class="field name"><input aria-label="名称框" .value=${this.cellName}>${icon(18, 12, svg`<path d="M1 1l8 9 8-9"/>`)}</div>
            <div class="field fx">${icons.search()}<em>fx</em><i class="rule"></i><input aria-label="编辑栏" .value=${this.formula}></div>
          </div>
          <div class="view">
            <sheet-grid .sheet=${this.sheet}></sheet-grid>
            <div class="vscroll"><i class="bar-mini"></i><i class="tri u"></i><div class="thumb" style=${styleMap({ height: `${this.vThumb}px` })}></div><i class="tri d"></i></div>
          </div>
          <div class="sheets">
            <button class="nav weak" aria-label="首个">${icons.navFirst()}</button><button class="nav weak" aria-label="上一个">${icons.navPrev()}</button>
            <button class="nav" aria-label="下一个">${icons.navNext()}</button><button class="nav" aria-label="末个">${icons.navLast()}</button>
            <button class="stab">门店GMV</button><button class="stab cur">源数据0701-0816</button>
            <button class="dots" aria-label="更多">${icons.dots()}</button><button aria-label="新建工作表">${icons.plusSmall()}</button>
            <div class="hscroll"><i class="stop"></i><i class="tri l"></i><div class="thumb" style=${styleMap({ width: `${this.hThumb}px` })}></div><i class="tri r"></i><i class="stop"></i></div>
          </div>
        </div>
        <div class="side">
          <button class="fold" aria-label="收起">${icon(28, 4, svg`<path stroke-width="4" stroke-linecap="round" d="M2 2h24"/>`)}</button>
          <button class="on" aria-label="选择">${icons.pointer()}</button>
          <button class="weak" aria-label="属性">${icons.sliders()}</button>
          <button class="weak" aria-label="转置">${icons.transpose()}</button>
          <button aria-label="美化">${icons.wand()}</button>
          <button aria-label="稻壳">${icons.shop()}</button>
          <button aria-label="历史">${icons.history()}</button>
          <button aria-label="更多">${icons.more()}</button>
        </div>
      </div>
      <div class="status">
        <button aria-label="JS宏">${icons.js()}</button><i class="rule r1"></i>
        <button class="backup"><i></i>本地备份开</button>
        <button class="set" aria-label="表格设置">${icons.tableGear()}</button>
        <button class="m1" aria-label="护眼">${icons.eye()}</button>
        <button class="m2" aria-label="阅读">${crossHair(26)}${chevron()}</button>
        <i class="rule r2"></i>
        <button class="sq" aria-label="普通视图">${icons.viewGrid()}</button>
        <button aria-label="分页视图">${icons.viewPage()}</button>
        <i class="rule r3"></i>
        <button class="zoom">100%${chevron()}</button>
        <button aria-label="缩小">${icons.minus()}</button>
        <input type="range" aria-label="缩放" min="0" max="100" value="50">
        <button aria-label="放大">${icons.plusSmall()}</button>
        <button class="full" aria-label="全屏">${corners(26)}</button>
      </div>
      ${this.tip ? html`<div class="tip" role="tooltip"><b>新建窗口</b>为当前文档另建一个新窗口。</div>` : nothing}
    `;
  }
}

/* ---------- dock ---------- */

const tile = (fill: string) => svg`<rect x="0" y="0" width="104" height="104" rx="24" fill=${fill}/>`;
const wpsMark = (fill: string) => svg`<path fill=${fill} fill-rule="evenodd" d="M17 28h36l-7 13-6 0 0 0h-9l11 24 16-37h31c4 0 6 3 4 7L74 76c-2 4-6 4-8 0l-7-14-7 15c-2 4-7 4-9 0L14 35c-1-4 0-7 3-7zM64 52l6 10 10-22H69z"/>`;

const launch = ["#5fe05a", "#ffc21f", "#f98a16", "#e0201c", "#9aa5a8", "#ff3d62", "#a54be0", "#1a9bff", "#2fcf9d"];

const dockArt: Record<string, unknown> = {
  finder: svg`<defs><linearGradient id="fi" x2="0" y2="1"><stop offset="0" stop-color="#1fc8ff"/><stop offset="1" stop-color="#1c6ef2"/></linearGradient><clipPath id="fc"><rect width="104" height="104" rx="24"/></clipPath></defs>
    <g clip-path="url(#fc)"><rect width="104" height="104" fill="url(#fi)"/><path fill="#e4e8ef" d="M57 0c-8 18-12 38-13 60h16c0 16 1 30 5 44h39V0z"/></g>
    <path d="M27 31v7M77 31v7" stroke="#1b2430" stroke-width="5" stroke-linecap="round"/><path d="M21 69c16 18 46 18 62 0" fill="none" stroke="#111" stroke-width="4" stroke-linecap="round"/>`,
  launchpad: svg`${tile("#b2b8c6")}${launch.map((f, i) => svg`<rect x=${17 + (i % 3) * 26} y=${17 + Math.floor(i / 3) * 25} width="19" height="19" rx="5" fill=${f}/>`)}`,
  safari: svg`<defs><linearGradient id="sa" x2="0" y2="1"><stop offset="0" stop-color="#27a6f2"/><stop offset="1" stop-color="#1e6ee8"/></linearGradient></defs>
    ${tile("#f4f4f4")}<circle cx="52" cy="52" r="45" fill="url(#sa)"/><circle cx="52" cy="52" r="39" fill="none" stroke="#fff" stroke-opacity=".85" stroke-width="6" stroke-dasharray="1 3"/>
    <path fill="#e8342c" d="M84 25L57 57l-9-9z"/><path fill="#f3f3f3" d="M20 79l28-31 9 9z"/>`,
  qqmusic: svg`${tile("#fff")}<circle cx="52" cy="52" r="39" fill="#ffdc00"/><path fill="#12c37a" d="M75 13c0 14-8 20-21 23l18 33c3 12-7 19-18 18-20-2-26-22-8-29 4-2 8-2 12-1L38 22c16 0 29-1 37-9z"/>`,
  appstore: svg`<defs><linearGradient id="as" x2="0" y2="1"><stop offset="0" stop-color="#1ab8fa"/><stop offset="1" stop-color="#1658dc"/></linearGradient></defs>
    ${tile("url(#as)")}<g stroke="#fff" stroke-width="9" stroke-linecap="round"><path d="M59 23L34 66M46 23l31 57M20 64h34M72 64h12M29 76l-4 6"/></g>`,
  pycharm: svg`<defs><clipPath id="pc"><rect width="104" height="104" rx="24"/></clipPath></defs><g clip-path="url(#pc)"><rect width="104" height="104" fill="#0bc6ee"/><path fill="#05d884" d="M66 0h38v56z"/><path fill="#f2ea1c" d="M104 54v50H40l40-60z"/><path fill="#3fe06a" d="M0 68l52 36H0z"/><path fill="#f2ea1c" d="M40 88l22 16H30z"/></g>
    <rect x="19" y="19" width="66" height="66" fill="#000"/><text x="26" y="51" fill="#fff" font-family="Inter" font-weight="700" font-size="33">PC</text><path stroke="#fff" stroke-width="5" d="M27 75h28"/>`,
  settings: svg`<defs><linearGradient id="st" x2="0" y2="1"><stop offset="0" stop-color="#dbe6ec"/><stop offset="1" stop-color="#8d8a86"/></linearGradient></defs>${tile("url(#st)")}
    <circle cx="52" cy="52" r="45" fill="#2b2d2e"/><g fill="none" stroke="#b3b9bb"><circle cx="52" cy="52" r="40" stroke-width="6" stroke-dasharray="3 2"/><circle cx="52" cy="52" r="34" stroke-width="6"/><circle cx="52" cy="52" r="23" stroke-width="5" stroke="#8a8f91"/><circle cx="52" cy="52" r="27" stroke-width="4" stroke-dasharray="2 2" stroke="#777b7d"/><path stroke-width="4" d="M52 52h32M52 52L36 24M52 52L36 80"/></g><circle cx="52" cy="52" r="14" fill="#77797a"/><path stroke="#b3b9bb" stroke-width="4" d="M52 52h16M52 52l-8-13M52 52l-8 13"/>`,
  rp: svg`<defs><linearGradient id="rp" x1="0" x2="1" y2="1"><stop offset="0" stop-color="#3dbcff"/><stop offset="1" stop-color="#2f57d8"/></linearGradient></defs>${tile("url(#rp)")}<path fill="#1c7cf2" d="M38 1h45c12 2 18 8 20 16L73 27z"/>
    <text x="52" y="74" text-anchor="middle" fill="#fff" font-family="Roboto" font-size="60">RP</text>`,
  figma: svg`${tile("#1d1d1d")}<path fill="#ff1a2a" d="M52 15H39a12 12 0 0 0 0 25h13z"/><path fill="#ff6a1f" d="M52 15h12a12 12 0 0 1 0 25H52z"/><path fill="#8f4dff" d="M52 40H39a12 12 0 0 0 0 25h13z"/><circle cx="64" cy="52" r="12" fill="#12b4ff"/><path fill="#0bd06a" d="M52 65H39a12 12 0 1 0 13 12z"/>`,
  wechat: svg`${tile("#09dd69")}<g fill="#fff"><path d="M40 20c16 0 28 10 28 23-14 0-27 10-24 25-5 1-10 0-14-1l-9 4 2-8c-17-12-11-43 17-43z"/><path d="M67 42c13 0 24 9 24 20 0 6-3 11-8 15l2 7-8-4c-18 6-34-5-34-18 0-11 11-20 24-20z"/></g><g fill="#09dd69"><circle cx="31" cy="36" r="4"/><circle cx="50" cy="36" r="4"/><circle cx="60" cy="55" r="3"/><circle cx="75" cy="55" r="3"/></g>`,
  textedit: svg`${tile("#fbfbfb")}<path stroke="#f3b6b6" stroke-width="2" d="M18 1v102"/><path stroke="#aaa" d="M0 27h104M0 40h104M0 53h104M0 66h104M0 78h104M0 90h104"/>
    <path stroke="#8aa4bb" stroke-width="11" d="M92 0L56 84"/><path stroke="#cfe0ee" stroke-width="4" d="M90 0L54 84"/><path stroke="#b59a63" stroke-width="2" d="M97 3L61 84"/><path fill="#444" d="M50 80l12 5-21 24z"/><path stroke="#9bb9d4" stroke-width="6" d="M97-10l-6 14"/>`,
  shapes: svg`${tile("#fff")}<path stroke="#000" stroke-width="3" d="M10 62L23 42"/><path d="M28 42h20v20H28zM84 42l11 20H73z"/><circle cx="62" cy="52" r="11"/><path d="M57 54c2 4 8 4 10 0M60 48v2M65 48v2" stroke="#fff" stroke-width="2" fill="none"/>`,
  bilibili: svg`<defs><linearGradient id="bi" x2="0" y2="1"><stop offset="0" stop-color="#ff78a8"/><stop offset="1" stop-color="#ff1f68"/></linearGradient></defs>${tile("url(#bi)")}<g fill="none" stroke="#ff94b8" stroke-opacity=".6" stroke-width="8"><rect x="16" y="27" width="72" height="56" rx="14"/><path d="M35 15l6 10M69 15l-6 10" stroke-linecap="round"/></g>
    <text x="52" y="66" text-anchor="middle" fill="#fff" font-family="Lato" font-weight="900" font-size="33">bilibili</text>`,
  wps: svg`<defs><linearGradient id="wp" x2="0" y2="1"><stop offset="0" stop-color="#ff1e1e"/><stop offset="1" stop-color="#ff4a0c"/></linearGradient></defs>${tile("#fff")}${wpsMark("url(#wp)")}<path fill="#ff9421" d="M58 28h18l-4 7-4 5-8-1-7 18-6-10z"/>`,
  sheet: svg`${tile("#fff")}<g opacity=".25">${wpsMark("#333")}</g><path fill="#17bd78" d="M48 0h32a24 24 0 0 1 24 24v32H56a8 8 0 0 1-8-8z"/><path d="M90 15H70a8 8 0 0 0 0 13h12a7 7 0 0 1 0 14H62" fill="none" stroke="#fff" stroke-width="5"/>`,
};

@customElement("app-root")
export class AppRoot extends LitElement {
  private readonly summary = summarySheet();
  private readonly source = sourceSheet();

  static styles = [shared, css`
    :host { display: flex; flex-direction: column; height: 100vh; position: relative; overflow: hidden; background: #000; color: #fff; font: 400 26px/32px Inter, "Noto Sans CJK SC", sans-serif; }
    .wall { position: absolute; inset: 0; width: 100%; height: 100%; }
    .menubar { position: relative; height: 74px; flex: none; display: flex; align-items: center; padding: 0 33px 0 42px; }
    .menubar a, .menubar span { white-space: nowrap; }
    .menubar nav { display: flex; align-items: center; gap: 44px; font-weight: 500; }
    .menubar a { color: inherit; text-decoration: none; }
    .apple { width: 28px; height: 32px; fill: #fff; margin-right: -4px; }
    .app { font-weight: 700; }
    .help { margin-left: auto; }
    .tray { display: flex; align-items: center; gap: 39px; margin-left: 101px; color: #e6e6e6; font-weight: 500; }
    .tray .pair { display: flex; align-items: center; gap: 12px; }
    .tray .pair.tight { gap: 8px; }
    .tray .pair.small { font-size: 22px; gap: 8px; }
    .clock { font-size: 27px; }
    .ime { width: 44px; height: 32px; border-radius: 5px; background: #e6e6e6; color: #000; font-size: 23px; font-weight: 700; text-align: center; line-height: 31px; }
    .desk { position: relative; flex: 1; min-height: 0; display: grid; grid-template-columns: 1446fr 1442fr; grid-template-rows: minmax(0, 1fr); gap: 20px; padding: 18px 17px 17px 15px; }
    .dock { position: relative; flex: none; display: flex; justify-content: space-between; height: 158px; margin: 0 118px 10px; padding: 22px 17px 0 21px; border: 2px solid #ffffff2e; border-radius: 44px; background: linear-gradient(90deg, #152649d9, #15295ad9 60%, #1d2b60d9); }
    .slot { position: relative; width: 103px; height: 134px; flex: none; display: block; }
    .slot > svg { display: block; width: 103px; height: 103px; overflow: visible; margin-top: -1px; }
    .slot.run::after { content: ""; position: absolute; left: 48px; bottom: 2px; width: 8px; height: 8px; border-radius: 50%; background: #98a6da; }
    .line { width: 2px; height: 118px; background: #ffffff40; margin: -2px 14px 0 16px; flex: none; }
    .pill { position: absolute; left: -12px; top: 79px; width: 127px; height: 36px; border-radius: 18px; background: #0a0f1ed9; color: #fff; font-size: 22px; line-height: 34px; font-weight: 500; text-align: center; }
    .slot.wide { width: 119px; margin: 0 -6px 0 -9px; }
    .slot.wide > svg { width: 119px; }
    .mark { position: absolute; right: 4px; bottom: 4px; z-index: 3; color: #d5d8dfc8; font: 400 57px/84px "Noto Sans CJK SC", sans-serif; white-space: nowrap; text-shadow: 2px 2px 1px #0005; }
  `];

  private wallpaper() {
    return html`<svg class="wall" viewBox="0 0 2940 1912" preserveAspectRatio="none" aria-hidden="true">
      <defs>
        <linearGradient id="earth" x2="0" y2="1"><stop offset="0" stop-color="#41639e"/><stop offset=".06" stop-color="#4c4d72"/><stop offset=".14" stop-color="#34407a"/><stop offset=".25" stop-color="#5b5068"/><stop offset=".4" stop-color="#4a4a72"/><stop offset=".55" stop-color="#56505e"/><stop offset=".7" stop-color="#1d2f66"/><stop offset=".85" stop-color="#061a45"/><stop offset="1" stop-color="#04153a"/></linearGradient>
        <linearGradient id="east"><stop offset=".5" stop-color="#1a2c6c" stop-opacity="0"/><stop offset="1" stop-color="#1d2d6e" stop-opacity=".8"/></linearGradient>
        <filter id="soft" x="-5%" y="-10%" width="110%" height="120%"><feGaussianBlur stdDeviation="14"/></filter>
      </defs>
      <path d="M-60 190Q1470 292 3000 945V1980H-60z" fill="url(#earth)"/>
      <path d="M-60 190Q1470 292 3000 945V1980H-60z" fill="url(#east)"/>
      <path d="M-60 205Q1470 322 3000 975" fill="none" stroke="#1446b4" stroke-width="44" filter="url(#soft)"/>
      <g fill="#8f8690" filter="url(#soft)" opacity=".55"><ellipse cx="640" cy="1734" rx="60" ry="10"/><ellipse cx="436" cy="1910" rx="24" ry="8"/></g>
    </svg>`;
  }

  private slot_(name: string, run = false, extra: unknown = nothing) {
    return html`<a class="slot ${run ? "run" : ""}" href="#${name}" aria-label=${name}><svg viewBox="0 0 104 104">${dockArt[name]}</svg>${extra}</a>`;
  }

  render() {
    return html`
      ${this.wallpaper()}
      <header class="menubar">
        <nav>
          <svg class="apple" viewBox="0 0 28 34" aria-hidden="true"><path d="M19 0c0 4-3 8-7 8 0-4 3-7 7-8zM14 10c2 0 4-2 7-2 2 0 5 1 6 4-5 3-4 10 1 12-2 5-5 9-8 9-2 0-3-1-6-1-2 0-4 1-6 1C4 33 0 26 0 19 0 12 4 8 8 8c3 0 4 2 6 2z"/></svg>
          <a class="app" href="#app">WPS Office</a>
          ${["文件", "编辑", "视图", "插入", "格式", "工具", "数据", "图表", "工作区", "窗口"].map((t) => html`<a href="#menu">${t}</a>`)}
        </nav>
        <a class="help" href="#help">帮助</a>
        <div class="tray">
          <span class="pair"><svg width="42" height="34" viewBox="0 0 42 34" aria-hidden="true"><g fill="#e6e6e6"><path d="M15 0c9 0 15 6 15 12-9 0-15 6-14 13l-6-1-5 3 1-5C-3 16-1 0 15 0z"/><path d="M28 13c8 0 13 5 13 10 0 4-1 6-4 8l1 3-5-2c-9 2-17-3-17-9 0-5 5-10 12-10z"/></g><g fill="#000"><circle cx="10" cy="9" r="2"/><circle cx="20" cy="9" r="2"/><circle cx="24" cy="20" r="2"/><circle cx="33" cy="20" r="2"/></g></svg>2</span>
          <svg class="ic" width="32" height="32" viewBox="0 0 32 32" aria-hidden="true"><rect x="2" y="8" width="28" height="22" rx="5" stroke-width="4"/><path stroke-width="3" d="M9 1l4 6M23 1l-4 6M12 16v6M20 16v6"/></svg>
          <span class="pair tight"><svg class="ic" width="28" height="24" viewBox="0 0 28 24" aria-hidden="true"><path d="M0 8h14a4 4 0 1 0-3-6M0 13h22a5 5 0 1 0-4-8M0 18h10a3 3 0 1 1-2 5M14 18h4"/></svg>25°C</span>
          <svg class="ic" width="28" height="28" viewBox="0 0 28 28" aria-hidden="true"><circle cx="14" cy="14" r="12" stroke-width="3"/><path class="fill" d="M10 8l10 6-10 6z"/></svg>
          <span class="pair small">62%<svg class="ic" width="52" height="24" viewBox="0 0 52 24" aria-hidden="true"><rect x="1" y="1" width="45" height="22" rx="6" stroke="#7c7c7c"/><rect x="4" y="4" width="24" height="16" rx="3" class="fill"/><path d="M49 8v8" stroke="#7c7c7c" stroke-width="3"/></svg></span>
          <span class="ime">拼</span>
          <svg class="ic" width="34" height="26" viewBox="0 0 34 26" aria-hidden="true"><g stroke-width="5"><path d="M2 9a21 21 0 0 1 30 0M8 15a13 13 0 0 1 18 0"/></g><path class="fill" d="M12 20q5-4 10 0l-5 5z"/></svg>
          <svg class="ic" width="26" height="26" viewBox="0 0 26 26" aria-hidden="true"><circle cx="11" cy="11" r="9" stroke-width="3"/><path stroke-width="4" d="M17 17l8 8"/></svg>
          <svg class="ic" width="28" height="28" viewBox="0 0 28 28" aria-hidden="true"><rect x="1" y="1" width="26" height="11" rx="6"/><circle cx="7" cy="7" r="3" class="fill"/><rect x="0" y="15" width="28" height="13" rx="7" class="fill"/><circle cx="21" cy="21" r="4" fill="#000" stroke="none"/></svg>
          <span class="clock">5月14日 周三&nbsp; 15:09</span>
        </div>
      </header>
      <main class="desk">
        <sheet-window .sheet=${this.summary} .cellName=${"B3"} .formula=${"=SUM('源数据0701-0816'!J2:J144)"} .tip=${true} .vThumb=${956} .hThumb=${352}></sheet-window>
        <sheet-window dimmed .sheet=${this.source} .cellName=${"B2"} .formula=${"6108"} .vThumb=${96} .hThumb=${100}></sheet-window>
      </main>
      <footer class="dock">
        ${this.slot_("finder", true)}${["launchpad", "safari", "qqmusic", "appstore", "pycharm", "settings", "rp", "figma"].map((n) => this.slot_(n))}
        ${this.slot_("wechat", true)}${this.slot_("textedit")}${this.slot_("shapes", true)}${this.slot_("bilibili", true)}
        <i class="line"></i>
        ${this.slot_("wps", true)}${this.slot_("wps")}${this.slot_("sheet", true, html`<span class="pill">拌客源数...</span>`)}
        <i class="line"></i>
        <a class="slot wide" href="#downloads" aria-label="downloads"><svg viewBox="0 0 119 104"><path fill="#0f97d4" d="M0 20V10a8 8 0 0 1 8-8h28c6 0 8 11 14 11h61a8 8 0 0 1 8 8v20H0z"/><rect y="20" width="119" height="81" rx="8" fill="#5fcdfc"/><circle cx="59" cy="56" r="22" fill="#2f98dc"/><path d="M59 45v21M50 58l9 9 9-9" fill="none" stroke="#7fd6fb" stroke-width="4"/></svg></a>
        <a class="slot wide" href="#window" aria-label="window"><svg viewBox="0 0 119 104"><rect y="23" width="119" height="58" rx="2" fill="#1c1e21"/><rect y="23" width="18" height="58" fill="#26282b"/><rect y="23" width="119" height="8" fill="#2b2d30"/>
          ${Array.from({ length: 11 }, (_, i) => svg`<path stroke="#a0a3a7" stroke-opacity=".6" d=${`M20 ${37 + i * 4}h${20 + ((i * 7) % 18)}M70 ${37 + i * 4}h18M98 ${37 + i * 4}h14`}/>`)}
          <rect x="80" y="71" width="38" height="38" rx="8" fill="#1b9bfa"/><path fill="#e9ecf2" d="M101 71c-3 8-5 14-5 22h6c0 6 0 11 2 16h6a8 8 0 0 0 8-8V79a8 8 0 0 0-8-8z"/><path d="M88 97q11 7 22 0" fill="none" stroke="#222" stroke-width="2"/></svg></a>
        <a class="slot" href="#trash" aria-label="trash"><svg viewBox="0 0 104 104"><defs><linearGradient id="tr"><stop offset="0" stop-color="#6f7373"/><stop offset=".35" stop-color="#a9adad"/><stop offset=".7" stop-color="#8a8e8e"/><stop offset="1" stop-color="#616565"/></linearGradient></defs>
          <ellipse cx="50" cy="7" rx="45" ry="12" fill="#4e5252"/><path fill="#e8e6e0" d="M12 2l18-10 12 6 14-6 20 8 14 10-12 12H26z"/><path fill="#3a7fc4" d="M28 4l12-4 6 10-12 6z"/><path fill="#b8442c" d="M56 2l14 2-4 12-12-2z"/><path fill="#333" d="M42 10l8-4 6 12H36z"/>
          <path fill="url(#tr)" d="M5 7c10 14 80 14 90 0L85 101c-8 10-60 10-70 0z"/></svg></a>
      </footer>
      <div class="mark">CSDN @害羞的白菜</div>
    `;
  }
}
